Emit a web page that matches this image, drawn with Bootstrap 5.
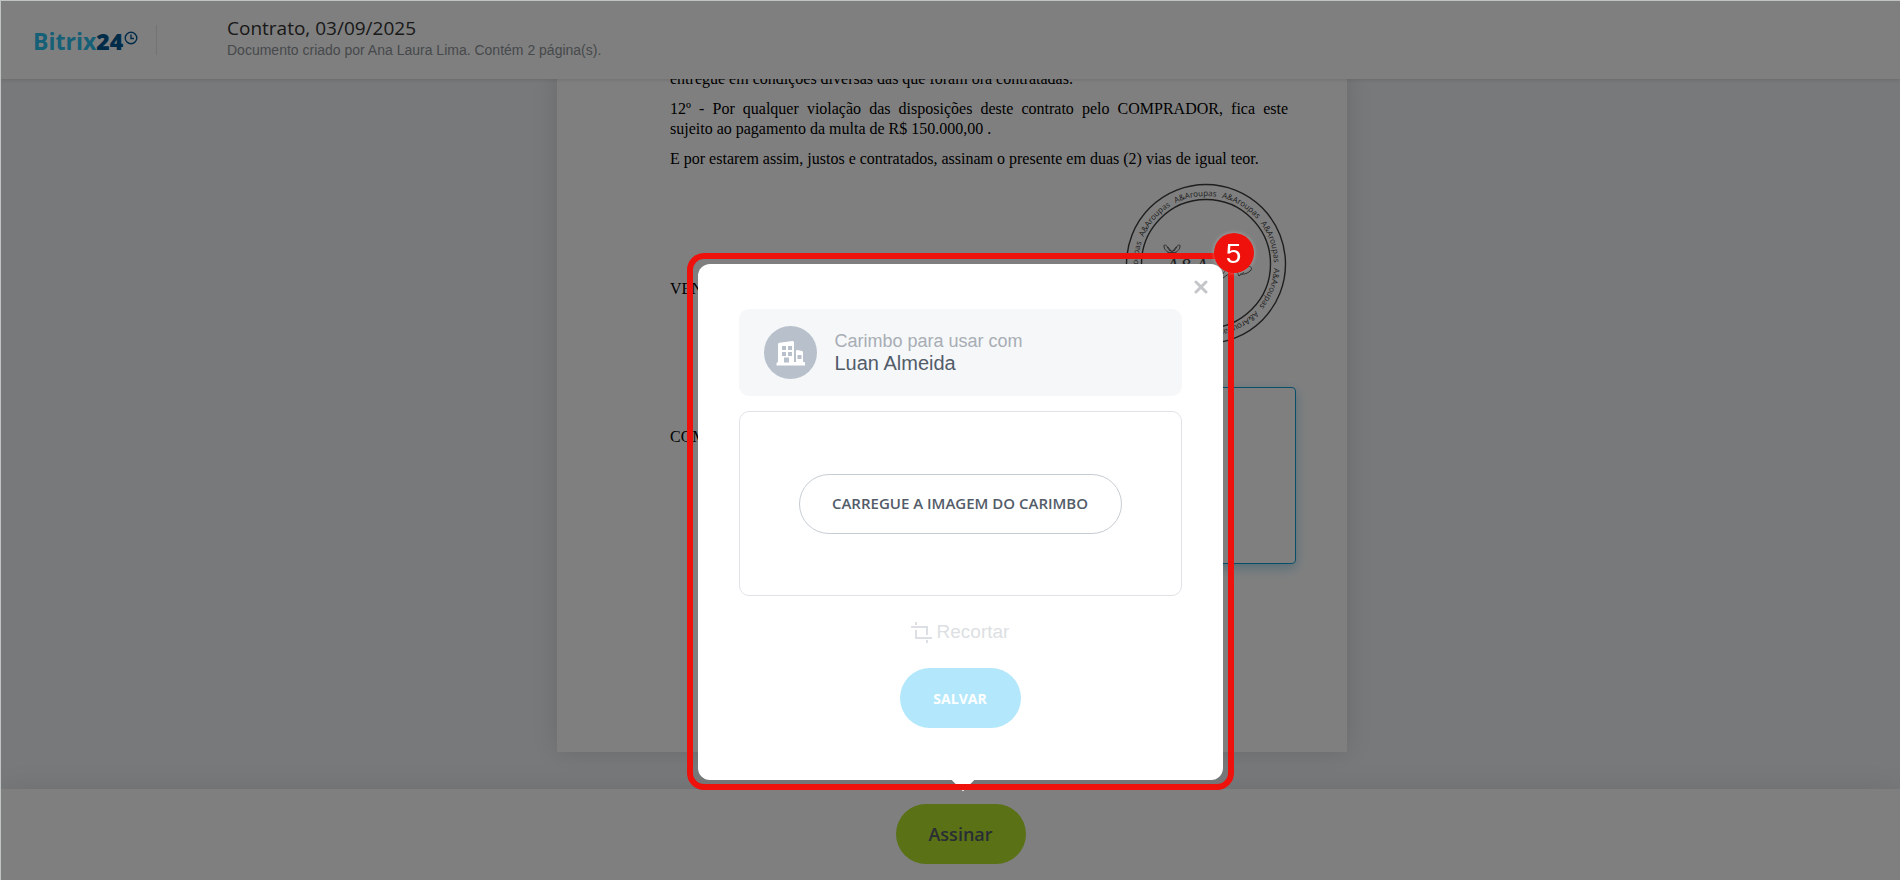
<!DOCTYPE html>
<html lang="pt-BR">
<head>
<meta charset="utf-8">
<meta name="viewport" content="width=device-width, initial-scale=1">
<title>Contrato, 03/09/2025</title>
<link href="https://cdn.jsdelivr.net/npm/bootstrap@5.3.0/dist/css/bootstrap.min.css" rel="stylesheet">
<style>
  body { font-family: "Liberation Sans", Arial, sans-serif; background: #eff2f5; }
  .open-sans { font-family: "Open Sans", sans-serif; }
  .site-header { height: 79px; padding: 0 0 4px 33px; box-shadow: 0 1px 4px rgba(0,0,0,.12); z-index: 1; }
  .brand { font: 700 23px/32px "Open Sans", sans-serif; color: #2cc0ee; width: 124px; height: 30px; border-right: 1px solid #e3e6e8; }
  .brand b { color: #005893; }
  .brand svg { margin: 6px 0 0 1px; }
  .doc-info { margin-left: 70px; }
  .doc-title { font-size: 19px; line-height: 24px; color: #333; }
  .doc-sub { font-size: 14px; line-height: 20px; color: #8d9298; }
  .viewer { padding: 0 0 37px 4px; min-height: 0; }
  .paper { width: 790px; flex: none; padding: 0 59px 188px 113px; color: #000; font: 16px/20px "Liberation Serif", "Times New Roman", serif; box-shadow: 0 0 24px rgba(0,0,0,.12); }
  .paper p { margin-bottom: 10px; text-align: justify; }
  .full-line { text-align-last: justify; }
  .sig-row { margin-top: 14px; height: 160px; }
  .sig-row + .sig-row { margin-top: 44px; height: 177px; }
  .sig-name { padding-top: 96px; }
  .sig-row + .sig-row .sig-name { padding-top: 40px; }
  .seal { margin-right: 1px; }
  .sig-field { width: 320px; height: 177px; margin-right: -8px; border: 1px solid #0f9fd0; border-radius: 4px; box-shadow: 0 4px 12px rgba(47,168,216,.4); }
  .site-footer { height: 91px; padding: 0 0 1px 21px; box-shadow: 0 -2px 24px rgba(0,0,0,.08); z-index: 1; }
  .pill { height: 60px; border-radius: 30px; border: 1px solid transparent; font-family: "Open Sans", sans-serif; font-weight: 600; }
  .pill-sign { width: 130px; font-size: 18px; color: #535c69; background: #b4e22c; }
  .veil { background: rgba(0,0,0,.5); padding: 0 0 90px 19px; z-index: 10; border: solid #bfc3c4; border-width: 1px 0 0 1px; }
  .frame { width: 547px; padding: 11px 11px 10px; }
  .frame::after { content: ""; position: absolute; inset: 0; border: 6px solid #ee110c; border-radius: 17px; pointer-events: none; }
  .step { position: absolute; top: -20px; right: -20px; width: 40px; height: 40px; line-height: 41px; font-size: 28px; color: #fff; background: #ee110c; z-index: 2; box-shadow: 0 0 4px rgba(255,255,255,.35); }
  .dialog { padding: 45px 41px 52px; border-radius: 12px; background: #fff; }
  .dialog::after { content: ""; position: absolute; left: 50%; bottom: -8px; width: 16px; height: 16px; margin-left: -5px; background: #fff; transform: rotate(45deg); }
  .close-x { position: absolute; top: 11px; right: 10px; width: 24px; height: 24px; padding: 0; border: 0; background: none; }
  .person { height: 87px; padding: 0 0 1px 25px; border-radius: 10px; background: #f5f7f9; gap: 18px; }
  .person .lbl { font-size: 18px; line-height: 22px; color: #a8adb4; }
  .person .who { font-size: 20px; line-height: 22px; color: #525c69; }
  .drop { height: 185px; margin-top: 15px; border: 1px solid #e0e3e6; border-radius: 10px; }
  .pill-load { width: 323px; font-size: 15px; color: #535c69; background: #fff; border-color: #c6cdd3; }
  .crop-btn { margin: 24px auto; height: 24px; border: 0; padding: 0; background: none; gap: 5px; font-size: 19px; line-height: 24px; color: #dcdfe3; }
  .pill-save { width: 121px; font-size: 14px; font-weight: 700; color: #fff; background: #b3e8fc; }
</style>
</head>
<body class="vh-100 overflow-hidden d-flex flex-column">

<header class="site-header bg-white d-flex align-items-center position-relative flex-shrink-0">
  <a href="#" class="brand d-flex text-decoration-none mt-1"><span>Bitrix<b>24</b></span>
    <svg width="14" height="14" viewBox="0 0 14 14" fill="none" stroke="#005893" stroke-width="1.4"><circle cx="7" cy="7" r="5.8"/><path d="M7 3.5V7.5H10"/></svg>
  </a>
  <div class="doc-info">
    <h1 class="doc-title open-sans fw-normal mb-0">Contrato, 03/09/2025</h1>
    <p class="doc-sub mb-0">Documento criado por Ana Laura Lima. Contém 2 página(s).</p>
  </div>
</header>

<main class="viewer flex-grow-1 d-flex justify-content-center align-items-end overflow-hidden">
  <article class="paper bg-white">
    <p>entregue em condições diversas das que foram ora contratadas.</p>
    <p><span class="full-line d-block">12º - Por qualquer violação das disposições deste contrato pelo COMPRADOR, fica este</span> sujeito ao pagamento da multa de R$ 150.000,00 .</p>
    <p>E por estarem assim, justos e contratados, assinam o presente em duas (2) vias de igual teor.</p>
    <div class="sig-row d-flex justify-content-between align-items-start">
      <span class="sig-name">VENDEDOR</span>
      <svg class="seal" width="162" height="162" viewBox="-81 -81 162 162">
        <defs><path id="ring" d="M0 68A68 68 0 0 1 0 -68A68 68 0 0 1 0 68"/></defs>
        <g fill="none" stroke="#3c3c3c" stroke-width="1.4"><circle r="79.500"/><circle r="64.500"/></g>
        <g font-family="Open Sans, sans-serif" font-size="8" fill="#3c3c3c" id="ringtext"></g>
        <g fill="none" stroke="#555" stroke-width="1">
          <path d="M-34 -11C-37 -17 -42 -21 -42 -18S-40 -12 -35 -11C-40 -12 -42 -8 -39 -8S-35 -9 -34 -11C-31 -17 -26 -21 -26 -18S-28 -12 -33 -11C-28 -12 -26 -8 -29 -8S-33 -9 -34 -11M-34 -14V-7M-39 -17L-36 -13M-29 -17L-32 -13"/>
          <path d="M40 4C43 1 47 3 45 6C43 9 37 11 34 10M30 5L33 12L38 8M16 11C20 5 23 3 25 5S20 12 17 14"/>
        </g>
        <text x="-40" y="9" font-family="Liberation Serif, serif" font-style="italic" font-size="21" fill="#444">A&amp;A</text>
      </svg>
    </div>
    <div class="sig-row d-flex justify-content-between align-items-start">
      <span class="sig-name">COMPRADOR</span>
      <div class="sig-field flex-shrink-0"></div>
    </div>
  </article>
</main>

<footer class="site-footer bg-white d-flex justify-content-center position-relative flex-shrink-0 align-items-center">
  <button type="button" class="pill pill-sign">Assinar</button>
</footer>

<div class="veil position-fixed top-0 start-0 w-100 h-100 d-flex justify-content-center align-items-end">
  <div class="frame position-relative">
    <section class="dialog position-relative text-center" role="dialog" aria-label="Carimbo">
      <button type="button" class="close-x d-flex align-items-center justify-content-center" aria-label="Fechar">
        <svg width="14" height="14" viewBox="0 0 14 14" stroke="#c4c6c9" stroke-width="3" stroke-linecap="round"><path d="M2 2L12 12M12 2L2 12"/></svg>
      </button>
      <div class="person d-flex align-items-center text-start">
        <svg width="53" height="53" viewBox="0 0 53 53"><circle cx="26.500" cy="26.500" r="26.500" fill="#b8c0cb"/>
          <path fill="#fff" d="M14 18.500Q14 17 15.500 16.700L28.500 15Q30 14.800 30 16.500V36H32V25Q32 24 33 24L38 25Q39 25.300 39 26.500V36H40.500Q41 36 41 37.500V39.500H12.500V37.500Q12.500 36 14 36Z"/>
          <path fill="#b8c0cb" d="M18 20h4v4h-4zM24 20h4v4h-4zM18 26h4v4h-4zM24 26h4v4h-4zM20 31.500h5v5h-5zM33.500 29h4v4h-4z"/></svg>
        <div><div class="lbl">Carimbo para usar com</div><div class="who">Luan Almeida</div></div>
      </div>
      <div class="drop d-flex align-items-center justify-content-center">
        <button type="button" class="pill pill-load text-nowrap">CARREGUE A IMAGEM DO CARIMBO</button>
      </div>
      <button type="button" class="crop-btn d-flex align-items-center">
        <svg width="21" height="21" viewBox="0 0 21 21" fill="none" stroke="#dcdfe3" stroke-width="2"><path d="M0 5H16V13M5 0V3M5 8V16H21M16 18V21"/></svg>
        Recortar
      </button>
      <button type="button" class="pill pill-save">SALVAR</button>
    </section>
    <span class="step rounded-circle text-center">5</span>
  </div>
</div>

<script src="https://cdn.jsdelivr.net/npm/bootstrap@5.3.0/dist/js/bootstrap.bundle.min.js"></script>
<script>
  // Nine company names, one every 40 degrees round the seal
  document.getElementById('ringtext').innerHTML = Array.from({length: 9}, (_, i) =>
    `<text transform="rotate(${i * 40 - 9})"><textPath href="#ring" startOffset="50%" text-anchor="middle">A&amp;Aroupas</textPath></text>`).join('');
</script>
</body>
</html>
